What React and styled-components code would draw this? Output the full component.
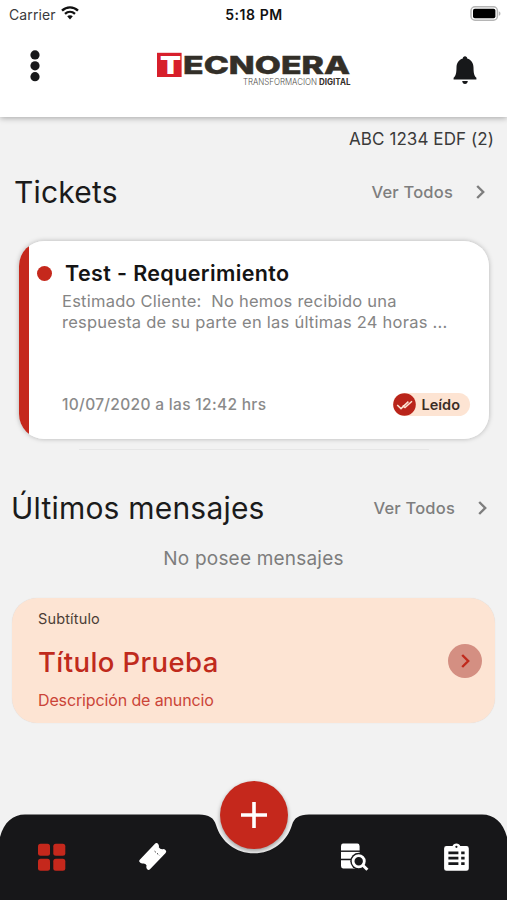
import styled, { createGlobalStyle } from "styled-components";

const GlobalStyle = createGlobalStyle`
  *{
    box-sizing: border-box;
  }
  body{
    margin: 0;
    background: #f2f2f2;
    font-family: "Inter", "Liberation Sans", sans-serif;
  }
  h2, h3, p{
    margin: 0;
  }
  button{
    border: 0;
    padding: 0;
    background: none;
    font-family: inherit;
    cursor: pointer;
  }
  svg{
    display: block;
  }
`;

const Screen = styled.div`
  display: flex;
  flex-direction: column;
  width: 507px;
  height: 900px;
  overflow: hidden;
  background: #f2f2f2;
`;

const TopWrapper = styled.header`
  position: relative;
  flex: none;
  height: 117px;
  background: #fff;
  box-shadow: 0 1px 6px rgba(0, 0, 0, 0.32);
`;

const StatusBar = styled.section`
  display: grid;
  grid-template-columns: 1fr auto 1fr;
  align-items: center;
  height: 28px;
  padding: 0 6px 0 9px;
  color: #1c1c1e;
  font-size: 14px;
  & > .carrier{
    display: flex;
    align-items: center;
    gap: 5px;
    color: #3a3a3c;
    letter-spacing: 0.1px;
  }
  & > .carrier > svg{
    margin-top: -3px;
  }
  & > strong{
    margin-left: -2px;
    font-weight: 600;
    letter-spacing: 0.55px;
    color: #111;
  }
  & > .battery{
    justify-self: end;
    margin-top: -2px;
  }
`;

const TopNav = styled.nav`
  display: flex;
  justify-content: space-between;
  align-items: flex-start;
  padding: 22px 30px 0 30px;
  & > .logo{
    margin-left: 14px;
  }
  & > .bell{
    margin-top: 6px;
    margin-right: 0;
  }
`;

const Content = styled.main`
  flex: 1;
  display: flex;
  flex-direction: column;
`;

const Plate = styled.p`
  padding: 12px 13px 0 0;
  text-align: right;
  font-size: 17px;
  line-height: 20px;
  letter-spacing: 0.08px;
  color: #3a3a3a;
`;

const SectionHead = styled.section`
  display: flex;
  justify-content: space-between;
  align-items: center;
  height: 40px;
  margin-top: ${({ $top }) => $top}px;
  padding: 0 ${({ $right }) => $right}px 0 ${({ $left }) => $left}px;
  h2{
    font-size: 30px;
    font-weight: 400;
    letter-spacing: 0.2px;
    color: #1b1b1b;
  }
`;

const MoreLink = styled.button`
  display: flex;
  align-items: center;
  gap: 23px;
  font-size: 16.5px;
  font-weight: 500;
  letter-spacing: 0.2px;
  color: #7e7e7e;
`;

const TicketCard = styled.article`
  display: flex;
  flex-direction: column;
  height: 198px;
  margin: 29px 18px 0 19px;
  padding: 19px 19px 23px 43px;
  border-radius: 25px;
  background: linear-gradient(to right, #c5281c 10px, #fff 10px);
  box-shadow: 0 0 5px rgba(0, 0, 0, 0.26);
  & > p{
    margin-top: 4px;
    font-size: 16.5px;
    line-height: 21px;
    letter-spacing: 0.24px;
    color: #858585;
    white-space: pre;
  }
`;

const TicketTitle = styled.h3`
  display: flex;
  align-items: center;
  gap: 13px;
  margin-left: -25px;
  font-size: 21.5px;
  font-weight: 600;
  line-height: 27px;
  letter-spacing: 0.38px;
  color: #141414;
  &::before{
    content: "";
    width: 15px;
    height: 15px;
    border-radius: 50%;
    background: #c5281c;
  }
`;

const TicketFoot = styled.footer`
  display: flex;
  justify-content: space-between;
  align-items: center;
  margin-top: auto;
  time{
    font-size: 15.5px;
    font-weight: 500;
    letter-spacing: 0.32px;
    color: #8a8a8a;
  }
`;

const ReadBadge = styled.span`
  display: flex;
  align-items: center;
  gap: 6px;
  height: 23px;
  padding-right: 10px;
  border-radius: 12px;
  background: #fde4d3;
  font-size: 14.5px;
  font-weight: 600;
  color: #3b2d26;
`;

const Divider = styled.hr`
  width: 350px;
  height: 1px;
  margin: 10px auto 0;
  border: 0;
  background: #e6e6e6;
`;

const Empty = styled.p`
  margin-top: 19px;
  text-align: center;
  font-size: 19px;
  line-height: 24px;
  letter-spacing: 0.2px;
  color: #7d7d7d;
`;

const AdCard = styled.article`
  display: flex;
  justify-content: space-between;
  align-items: center;
  height: 125px;
  margin: 27px 12px 0;
  padding: 0 13px 0 26px;
  border-radius: 25px;
  background: #fde4d3;
  box-shadow: 0 0 1px rgba(0, 0, 0, 0.12);
  .sub{
    font-size: 14.5px;
    line-height: 16px;
    letter-spacing: 0.15px;
    color: #4b3d36;
  }
  h3{
    margin-top: 17px;
    font-size: 27.5px;
    font-weight: 500;
    line-height: 36px;
    letter-spacing: 0.4px;
    color: #c02a1c;
  }
  .desc{
    margin-top: 10px;
    font-size: 16px;
    line-height: 20px;
    letter-spacing: -0.13px;
    color: #cb4438;
  }
`;

const RoundArrow = styled.button`
  display: flex;
  justify-content: center;
  align-items: center;
  width: 34px;
  height: 34px;
  border-radius: 50%;
  background: #d48f82;
  color: #c02a1c;
`;

const TabBar = styled.nav`
  position: relative;
  flex: none;
  display: flex;
  justify-content: space-between;
  align-items: flex-start;
  height: 86px;
  padding: 29px 38px 0;
  /* bar with a round notch for the add button */
  &::before{
    content: "";
    position: absolute;
    inset: 0;
    background: #171719;
    clip-path: path("M0 23C4 8 13 .5 25 .5H199C209 .5 214 4 216 11C221 28 236 39.3 254 39.3S287 28 292 11C294 4 299 .5 309 .5H482C494 .5 503 8 507 23V86H0Z");
  }
`;

const TabItem = styled.button`
  position: relative;
  margin-right: ${({ $gap }) => $gap || 0}px;
  color: ${({ $active }) => ($active ? "#c5281c" : "#fff")};
`;

const AddButton = styled.button`
  position: absolute;
  top: -33.5px;
  left: 219.7px;
  display: flex;
  justify-content: center;
  align-items: center;
  width: 68.5px;
  height: 68.5px;
  border-radius: 50%;
  background: #c5281c;
  box-shadow: 0 2px 4px rgba(0, 0, 0, 0.36);
`;

function Wifi() {
  return (
    <svg width="18" height="14" viewBox="0 0 18 14" fill="none" stroke="#111">
      <path d="M1 4.6C5.6.3 12.4.3 17 4.6" strokeWidth="2.4" />
      <path d="M4 7.9C6.9 5.3 11.1 5.3 14 7.9" strokeWidth="2.3" />
      <path d="M6.2 10.3C7.8 8.9 10.2 8.9 11.8 10.3L9 13.4Z" fill="#111" stroke="none" />
    </svg>
  );
}

function Battery() {
  return (
    <svg className="battery" width="31" height="15" viewBox="0 0 31 15">
      <rect x="1" y="0.8" width="26.4" height="13.4" rx="4" fill="#fff" stroke="#b5b5b5" strokeWidth="1.5" />
      <rect x="3" y="2.8" width="22.4" height="9.4" rx="1.8" fill="#000" />
      <path d="M28.8 5.2C31 6 31 9 28.8 9.8Z" fill="#b5b5b5" />
    </svg>
  );
}

function Dots() {
  return (
    <svg width="10" height="32" viewBox="0 0 10 32" fill="#17181a">
      <circle cx="5" cy="4.9" r="4.6" />
      <circle cx="5" cy="15.8" r="4.6" />
      <circle cx="5" cy="26.7" r="4.6" />
    </svg>
  );
}

function Logo() {
  return (
    <svg className="logo" width="196" height="40" viewBox="0 0 196 40">
      <rect x="1" y="2.8" width="24.6" height="24.2" fill="#d71f2b" />
      <text
        x="4"
        y="24.2"
        fontSize="24.4"
        fontWeight="900"
        fill="#fff"
        textLength="21"
        lengthAdjust="spacingAndGlyphs"
      >
        T
      </text>
      <text
        x="27"
        y="24.1"
        fontSize="25"
        fontWeight="800"
        fill="#332f28"
        stroke="#332f28"
        strokeWidth="0.5"
        textLength="167"
        lengthAdjust="spacingAndGlyphs"
      >
        ECNOERA
      </text>
      <text x="87" y="35.4" fontSize="8.8" fontWeight="300" fill="#55524e" textLength="74" lengthAdjust="spacingAndGlyphs">
        TRANSFORMACION
      </text>
      <text x="163" y="35.4" fontSize="8.8" fontWeight="700" fill="#332f28" textLength="31.5" lengthAdjust="spacingAndGlyphs">
        DIGITAL
      </text>
    </svg>
  );
}

function Bell() {
  return (
    <svg className="bell" width="24" height="29" viewBox="0 0 24 29" fill="#17181a">
      <path d="M12 0.3C13.3.3 14.2 1.2 14.2 2.6C18.2 3.8 20.4 7 20.5 11.5C20.6 17 21 19.4 23.4 21.8V23.4H.6V21.8C3 19.4 3.4 17 3.5 11.5C3.6 7 5.8 3.8 9.8 2.6C9.8 1.2 10.7.3 12 .3Z" />
      <path d="M9.2 25H14.8C14.6 27 13.6 28 12 28S9.4 27 9.2 25Z" />
    </svg>
  );
}

function Chevron() {
  return (
    <svg width="9" height="14" viewBox="0 0 9 14" fill="none" stroke="currentColor" strokeWidth="2.4">
      <path d="M1.2 1L7.2 7L1.2 13" />
    </svg>
  );
}

function ReadCheck() {
  return (
    <svg width="23" height="23" viewBox="0 0 23 23">
      <circle cx="11.5" cy="11.5" r="11.3" fill="#b9241a" />
      <path
        d="M4.2 12L8 15.6L15.4 8.6M9.6 12.6L12 14.6L19 8.2"
        fill="none"
        stroke="#fde4d3"
        strokeWidth="1.5"
      />
    </svg>
  );
}

function GridIcon() {
  return (
    <svg width="28" height="28" viewBox="0 0 28 28" fill="currentColor">
      <rect x="0" y="0.8" width="12" height="12" rx="2.5" />
      <rect x="15.3" y="0.8" width="12" height="12" rx="2.5" />
      <rect x="0" y="15.8" width="12" height="12" rx="2.5" />
      <rect x="15.3" y="15.8" width="12" height="12" rx="2.5" />
    </svg>
  );
}

function TicketIcon() {
  return (
    <svg width="28" height="29" viewBox="0 0 28 29" fill="currentColor">
      <path d="M16.2 .4Q17.8 -.6 19 .8Q20.4 2.4 19.8 4.2Q21.4 6.8 24.4 6Q26.2 6.2 27 7.8Q27.6 9 26.4 10.2L11 26.2Q9.6 27.6 8.2 26.2Q6.8 24.4 7.6 22.6Q6.4 19.8 3.2 20.6Q1.4 20.4 .4 18.8Q-.2 17.6 1 16.4Z" />
      <path d="M15.6 8.2L20.6 12.6" stroke="#17181a" strokeWidth="0.9" strokeDasharray="1.6 1.6" />
    </svg>
  );
}

function SearchDataIcon() {
  return (
    <svg width="28" height="29" viewBox="0 0 28 29" fill="currentColor">
      <path d="M2 .6H16.4Q18.4.6 18.6 3V7.4H0V3Q.2.6 2 .6Z" />
      <rect x="0" y="8.9" width="18.6" height="6.8" />
      <path d="M0 17.2H18.6V25.4H2Q0 25.4 0 23Z" />
      <circle cx="17.7" cy="18.2" r="8.4" fill="#17181a" />
      <circle cx="17.7" cy="18.2" r="5.6" fill="none" stroke="currentColor" strokeWidth="2.8" />
      <path d="M21.6 22L26.4 26.8" stroke="currentColor" strokeWidth="3" />
    </svg>
  );
}

function ClipboardIcon() {
  return (
    <svg width="25" height="29" viewBox="0 0 25 29">
      <path
        d="M2.5 3H8.6C9 1.2 10.4.4 12.4.4S15.8 1.2 16.2 3H22.4Q24.8 3 24.8 5.4V25.4Q24.8 27.8 22.4 27.8H2.5Q.1 27.8.1 25.4V5.4Q.1 3 2.5 3Z"
        fill="currentColor"
      />
      <circle cx="12.4" cy="3.8" r="1.1" fill="#17181a" />
      <path d="M4.4 9.8H14.4M4.4 15.2H14.4M4.4 20.6H14.4M17.2 9.8H20.6M17.2 15.2H20.6M17.2 20.6H20.6" stroke="#17181a" strokeWidth="2.7" />
    </svg>
  );
}

function PlusIcon() {
  return (
    <svg width="26" height="26" viewBox="0 0 26 26" stroke="#fff" strokeWidth="3.6">
      <path d="M0 13H26M13 0V26" />
    </svg>
  );
}

function Top() {
  return (
    <TopWrapper>
      <StatusBar>
        <span className="carrier">Carrier <Wifi /></span>
        <strong>5:18 PM</strong>
        <Battery />
      </StatusBar>
      <TopNav>
        <Dots />
        <Logo />
        <Bell />
      </TopNav>
    </TopWrapper>
  );
}

function Tickets() {
  return (
    <>
      <SectionHead $top={23} $left={14} $right={22}>
        <h2>Tickets</h2>
        <MoreLink>Ver Todos <Chevron /></MoreLink>
      </SectionHead>
      <TicketCard>
        <TicketTitle>Test - Requerimiento</TicketTitle>
        <p>{"Estimado Cliente:  No hemos recibido una\nrespuesta de su parte en las últimas 24 horas ..."}</p>
        <TicketFoot>
          <time>10/07/2020 a las 12:42 hrs</time>
          <ReadBadge><ReadCheck /> Leído</ReadBadge>
        </TicketFoot>
      </TicketCard>
    </>
  );
}

function Messages() {
  return (
    <>
      <SectionHead $top={38} $left={11} $right={20}>
        <h2>Últimos mensajes</h2>
        <MoreLink>Ver Todos <Chevron /></MoreLink>
      </SectionHead>
      <Empty>No posee mensajes</Empty>
    </>
  );
}

function Ad() {
  return (
    <AdCard>
      <section>
        <p className="sub">Subtítulo</p>
        <h3>Título Prueba</h3>
        <p className="desc">Descripción de anuncio</p>
      </section>
      <RoundArrow><Chevron /></RoundArrow>
    </AdCard>
  );
}

function Tabs() {
  return (
    <TabBar>
      <TabItem $active><GridIcon /></TabItem>
      <TabItem $gap={100}><TicketIcon /></TabItem>
      <TabItem $gap={2}><SearchDataIcon /></TabItem>
      <TabItem><ClipboardIcon /></TabItem>
      <AddButton><PlusIcon /></AddButton>
    </TabBar>
  );
}

export default function App() {
  return (
    <>
      <GlobalStyle />
      <Screen>
        <Top />
        <Content>
          <Plate>ABC 1234 EDF (2)</Plate>
          <Tickets />
          <Divider />
          <Messages />
          <Ad />
        </Content>
        <Tabs />
      </Screen>
    </>
  );
}
